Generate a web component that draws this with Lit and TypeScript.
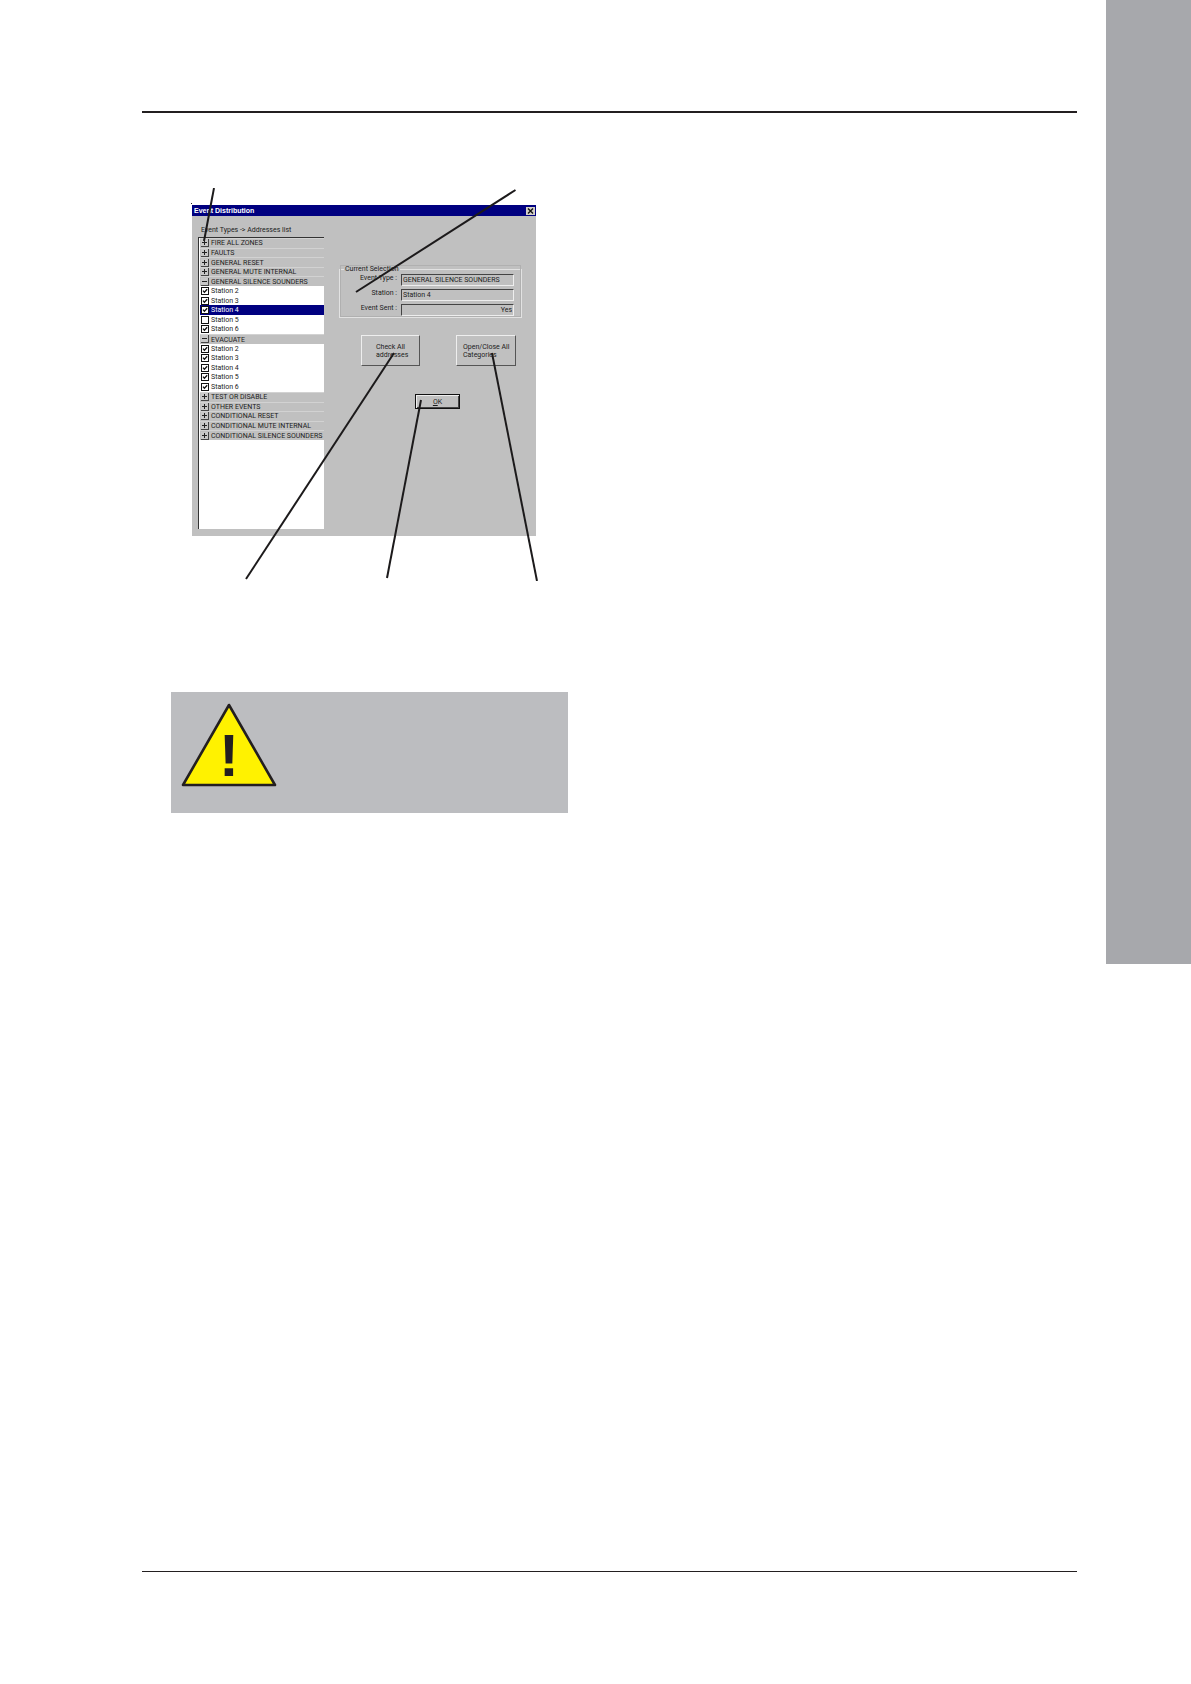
import { LitElement, html, css, svg } from "lit";
import { customElement, state } from "lit/decorators.js";
import { classMap } from "lit/directives/class-map.js";

interface Category {
  name: string;
  open: boolean;
  stations: { name: string; checked: boolean }[];
}

const stations = (unchecked: number[] = []) =>
  [2, 3, 4, 5, 6].map((n) => ({ name: `Station ${n}`, checked: !unchecked.includes(n) }));

const category = (name: string, open = false, unchecked: number[] = []): Category => ({
  name,
  open,
  stations: stations(unchecked),
});

@customElement("event-distribution")
export class EventDistribution extends LitElement {
  static styles = css`
    :host {
      display: block;
      width: 344px;
      font: 7px/10px Roboto, "Liberation Sans", sans-serif;
      color: #1c1c1c;
    }
    * {
      box-sizing: border-box;
    }
    button,
    input {
      font: inherit;
      color: inherit;
      margin: 0;
      padding: 0;
      border-radius: 0;
    }
    .window {
      background: #c0c0c0;
    }
    .title {
      display: flex;
      align-items: center;
      justify-content: space-between;
      height: 11px;
      padding: 0 1px 0 2px;
      background: #000080;
      color: #fff;
    }
    .title h1 {
      margin: 0;
      font: bold 7px/11px "Liberation Sans", sans-serif;
    }
    .close {
      display: grid;
      place-items: center;
      width: 9px;
      height: 8px;
      border: 0;
      background: #d4d0c8;
    }
    .body {
      display: flex;
      height: 320px;
      padding: 9px 14px 7px 6px;
      gap: 15px;
    }
    .left {
      display: flex;
      flex-direction: column;
      flex: none;
      width: 126px;
    }
    .caption {
      height: 12px;
      padding-left: 3px;
      white-space: nowrap;
    }
    .list {
      flex: 1;
      overflow: hidden;
      background: #fff;
      border-top: 1px solid #333;
      border-left: 1px solid #333;
    }
    .rows {
      display: grid;
      grid-auto-rows: 1fr;
      height: 202px;
      margin: 0;
      padding: 0 0 0 1px;
      list-style: none;
    }
    .row {
      display: flex;
      align-items: center;
      gap: 2px;
      min-height: 0;
      padding-left: 1px;
      white-space: nowrap;
    }
    .row.head {
      background: #c0c0c0;
      border-top: 1px solid #d2d2d2;
    }
    .row.selected {
      background: #000080;
      color: #fff;
    }
    .row label {
      flex: 1;
    }
    .toggle {
      display: grid;
      place-items: center;
      flex: none;
      width: 8px;
      height: 8px;
      background: #c8c8c8;
      border: solid #444;
      border-width: 0 1px 1px 0;
    }
    .check {
      appearance: none;
      flex: none;
      width: 8px;
      height: 8px;
      border: 1px solid #111;
      background: #fff;
    }
    .box {
      display: grid;
      flex: none;
    }
    .box > * {
      grid-area: 1 / 1;
    }
    .tick {
      pointer-events: none;
    }
    .right {
      display: flex;
      flex-direction: column;
      flex: 1;
      min-width: 0;
      padding-top: 39px;
    }
    fieldset {
      display: grid;
      gap: 3px;
      margin: 0;
      padding: 0 7px 1px 0;
      border: 1px solid #e2e2e2;
      outline: 1px solid #b0b0b0;
      outline-offset: -2px;
    }
    legend {
      height: 10px;
      margin-left: 4px;
      padding: 0 1px;
      background: #c0c0c0;
    }
    .field {
      display: grid;
      grid-template-columns: 1fr 113px;
      column-gap: 4px;
      height: 12px;
    }
    .field label {
      text-align: right;
      line-height: 9px;
    }
    .field input {
      width: 100%;
      min-width: 0;
      height: 12px;
      padding-left: 1px;
      background: #c0c0c0;
      border: 1px solid;
      border-color: #444 #eee #eee #444;
    }
    .field .end {
      text-align: right;
      padding-right: 1px;
    }
    .actions {
      display: flex;
      justify-content: space-between;
      padding: 17px 6px 0 22px;
    }
    .action {
      width: 59px;
      height: 31px;
      padding-left: 14px;
      text-align: left;
      line-height: 8px;
      background: #c0c0c0;
      border: 1px solid;
      border-color: #eee #555 #555 #eee;
      white-space: nowrap;
    }
    .wide {
      width: 60px;
      padding-left: 6px;
    }
    .ok {
      width: 45px;
      height: 15px;
      margin-top: 28px;
      margin-left: 76px;
      background: #c0c0c0;
      border: 1px solid #111;
      box-shadow: inset 1px 1px #eee, inset -1px -1px #444;
    }
  `;

  @state() private categories: Category[] = [
    category("FIRE ALL ZONES"),
    category("FAULTS"),
    category("GENERAL RESET"),
    category("GENERAL MUTE INTERNAL"),
    category("GENERAL SILENCE SOUNDERS", true, [5]),
    category("EVACUATE", true),
    category("TEST OR DISABLE"),
    category("OTHER EVENTS"),
    category("CONDITIONAL RESET"),
    category("CONDITIONAL MUTE INTERNAL"),
    category("CONDITIONAL SILENCE  SOUNDERS"),
  ];

  @state() private selected = { category: 4, station: 2 };

  private toggle(c: Category) {
    c.open = !c.open;
    this.requestUpdate();
  }

  private check(ci: number, si: number) {
    const s = this.categories[ci].stations[si];
    s.checked = !s.checked;
    this.selected = { category: ci, station: si };
  }

  private checkAll() {
    this.categories.forEach((c) => c.stations.forEach((s) => (s.checked = true)));
    this.requestUpdate();
  }

  private toggleAll() {
    const open = !this.categories.some((c) => c.open);
    this.categories.forEach((c) => (c.open = open));
    this.requestUpdate();
  }

  private rows() {
    return this.categories.map(
      (c, ci) => html`
        <li class="row head">
          <button class="toggle" aria-label=${c.name} aria-expanded=${c.open} @click=${() => this.toggle(c)}>
            <svg width="5" height="5" viewBox="0 0 5 5" fill="none" stroke="#222">
              <path d=${c.open ? "M0 2.5H5" : "M0 2.5H5M2.5 0V5"} />
            </svg>
          </button>
          <span>${c.name}</span>
        </li>
        ${c.open
          ? c.stations.map((s, si) => {
              const id = `s-${ci}-${si}`;
              const on = this.selected.category === ci && this.selected.station === si;
              return html`<li class=${classMap({ row: true, selected: on })}>
                <span class="box">
                  <input class="check" type="checkbox" id=${id} .checked=${s.checked}
                    @change=${() => this.check(ci, si)} />
                  ${s.checked
                    ? html`<svg class="tick" width="8" height="8" viewBox="0 0 8 8" fill="none"
                        stroke="#111" stroke-width="1.3"><path d="M2 3.6L3.4 5.2L6.2 2.2" /></svg>`
                    : ""}
                </span>
                <label for=${id}>${s.name}</label>
              </li>`;
            })
          : ""}
      `
    );
  }

  render() {
    const c = this.categories[this.selected.category];
    const s = c.stations[this.selected.station];
    return html`
      <section class="window">
        <header class="title">
          <h1>Event Distribution</h1>
          <button class="close" aria-label="Close">
            <svg width="7" height="6" viewBox="0 0 7 6" stroke="#111" stroke-width="1.4">
              <path d="M1 .5L6 5.5M6 .5L1 5.5" />
            </svg>
          </button>
        </header>
        <div class="body">
          <div class="left">
            <div class="caption">Event Types -&gt; Addresses list</div>
            <div class="list"><ul class="rows">${this.rows()}</ul></div>
          </div>
          <div class="right">
            <fieldset>
              <legend>Current Selection</legend>
              <div class="field">
                <label for="type">Event Type :</label>
                <input id="type" readonly .value=${c.name} />
              </div>
              <div class="field">
                <label for="station">Station :</label>
                <input id="station" readonly .value=${s.name} />
              </div>
              <div class="field">
                <label for="sent">Event Sent :</label>
                <input id="sent" class="end" readonly .value=${s.checked ? "Yes" : "No"} />
              </div>
            </fieldset>
            <div class="actions">
              <button class="action" @click=${this.checkAll}>Check All<br />addresses</button>
              <button class="action wide" @click=${this.toggleAll}>Open/Close All<br />Categories</button>
            </div>
            <button class="ok"><u>O</u>K</button>
          </div>
        </div>
      </section>
    `;
  }
}

const leaders = [
  "M214 188L204 241",
  "M515.5 190L356 292",
  "M394 353L246 579",
  "M421 400L387 578",
  "M492 353L537 581",
];

@customElement("app-root")
export class AppRoot extends LitElement {
  static styles = css`
    :host {
      display: block;
      background: #fff;
      color: #231f20;
      font-family: "Liberation Sans", sans-serif;
    }
    * {
      box-sizing: border-box;
    }
    .page {
      display: grid;
      grid-template-columns: minmax(0, 1fr) 85px;
      min-height: 100vh;
    }
    .sheet {
      display: flex;
      flex-direction: column;
      padding: 0 29px 0 142px;
    }
    .top {
      height: 113px;
      border-bottom: 2px solid #231f20;
    }
    .bottom {
      height: 113px;
      border-top: 1px solid #231f20;
    }
    .content {
      flex: 1;
      display: grid;
      grid-template-columns: 397fr 509fr;
      padding: 75px 0 0 29px;
    }
    .figure {
      position: relative;
      margin: 0 0 111px;
      padding: 17px 0 45px 21px;
    }
    .leaders {
      position: absolute;
      top: 0;
      left: 0;
      pointer-events: none;
    }
    .warning {
      height: 121px;
      padding: 10px 8px;
      background: #bcbdc0;
    }
    .sign {
      display: block;
    }
    .tab {
      height: 964px;
      background: #a7a8ac;
    }
  `;

  render() {
    return html`
      <div class="page">
        <div class="sheet">
          <header class="top"></header>
          <main class="content">
            <div>
              <figure class="figure">
                <event-distribution></event-distribution>
                <svg class="leaders" width="397" height="393" viewBox="171 188 397 393" fill="none"
                  stroke="#1c1a1b" stroke-width="2" aria-hidden="true">
                  ${leaders.map((d) => svg`<path d=${d} />`)}
                  <rect x="191" y="203" width="1" height="1" fill="#222" stroke="none" />
                </svg>
              </figure>
              <div class="warning">
                <svg class="sign" width="100" height="88" viewBox="0 0 100 88" role="img" aria-label="Warning">
                  <path d="M50 3L96 83H4Z" fill="#fff200" stroke="#231f20" stroke-width="2.6" stroke-linejoin="round" />
                  <text x="50" y="74" text-anchor="middle" font-size="60" font-weight="bold" fill="#231f20">!</text>
                </svg>
              </div>
            </div>
          </main>
          <footer class="bottom"></footer>
        </div>
        <aside class="tab"></aside>
      </div>
    `;
  }
}
